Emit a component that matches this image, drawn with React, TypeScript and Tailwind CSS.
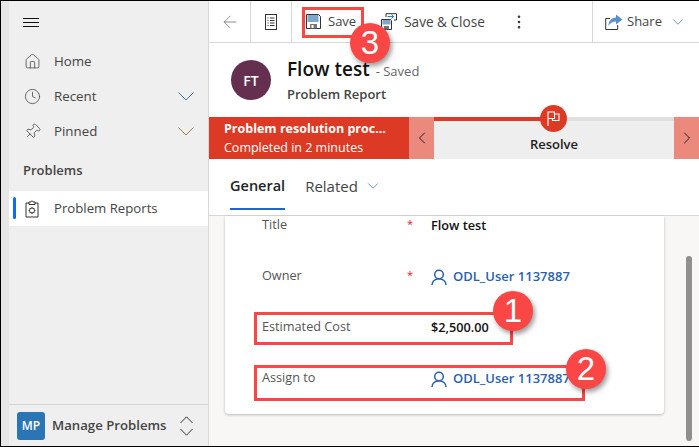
import { ChevronDown, ChevronLeft, ChevronRight, Clock, Home, Pin, ArrowLeft, MoreVertical } from "lucide-react";

const font = { fontFamily: '"Open Sans", "Noto Sans", sans-serif' };

function PersonIcon() {
  return (
    <svg width="16" height="17" viewBox="0 0 16 17" fill="none" stroke="#2a5fb0" strokeWidth="1.5" className="shrink-0">
      <circle cx="8" cy="5.5" r="4.3" />
      <path d="M1 16c0-3.6 3-6.2 7-6.2s7 2.6 7 6.2" />
    </svg>
  );
}

function SaveIcon() {
  return (
    <svg width="15" height="15" viewBox="0 0 15 15" className="shrink-0">
      <path d="M.5.5h12l2 2v12H.5z" fill="#fff" stroke="#333" />
      <rect x="1.5" y="1" width="11" height="7" fill="#7fa8c9" />
      <rect x="4" y="10" width="7" height="4.5" fill="#777" />
      <rect x="5.5" y="11" width="2" height="3" fill="#fff" />
    </svg>
  );
}

function SaveCloseIcon() {
  return (
    <svg width="16" height="17" viewBox="0 0 16 17" className="shrink-0">
      <path d="M.5 6.5h9l1 1v9H.5z" fill="#fff" stroke="#333" />
      <rect x="1.5" y="7" width="8" height="4.5" fill="#7fa8c9" />
      <rect x="3" y="13" width="5" height="3.5" fill="#777" />
      <path d="M5 4V.7h10.5V7H13" fill="none" stroke="#333" />
      <path d="M6.5 3.5h6M10.5 1.5l2 2-2 2" fill="none" stroke="#2b7cd3" />
    </svg>
  );
}

function FormIcon() {
  return (
    <svg width="12" height="16" viewBox="0 0 12 16" fill="none" stroke="#333" className="shrink-0">
      <rect x=".5" y=".5" width="11" height="15" />
      <path d="M2.5 4h1M5 4h4.5M2.5 6.5h1M5 6.5h4.5M2.5 9h1M5 9h4.5M2.5 11.500h1M5 11.500h4.500" />
    </svg>
  );
}

function ShareIcon() {
  return (
    <svg width="18" height="16" viewBox="0 0 18 16" fill="none" className="shrink-0">
      <path d="M5 4.500H.7v11h12V11" stroke="#333" />
      <path d="M11 .5l6.500 5-6.500 5V7.500C7.500 7.500 5 9 3.500 12 3.500 7 6.500 3.500 11 3.500z" fill="#5b8fc9" />
    </svg>
  );
}

function ReportIcon() {
  return (
    <svg width="14" height="18" viewBox="0 0 14 18" fill="none" stroke="#333" className="shrink-0">
      <path d="M4 3H1v14h12V3h-3" />
      <path d="M4 4.500V2h2a1 1 0 0 1 2 0h2v2.500z" />
      <circle cx="7" cy="10.500" r="2.500" />
      <path d="M7 7v1M7 13v1M3.500 10.500h1M9.500 10.500h1M4.700 8.200l.6.6M8.700 12.200l.6.6M9.300 8.200l-.6.6M5.300 12.200l-.6.6" />
    </svg>
  );
}

function FlagIcon() {
  return (
    <svg width="13" height="15" viewBox="0 0 13 15" fill="none" stroke="#fff" strokeWidth="1.100">
      <path d="M1 15V1h6.500v6.500H1M7.500 3H12v6.500H5.500V7.500" />
    </svg>
  );
}

function WideChevron({ className }: { className: string }) {
  return (
    <svg width="16" height="9" viewBox="0 0 16 9" fill="none" stroke="currentColor" className={className}>
      <path d="M.5.5L8 8l7.500-7.500" />
    </svg>
  );
}

function UpDownIcon() {
  return (
    <svg width="13" height="20" viewBox="0 0 13 20" fill="none" stroke="#333">
      <path d="M.5 7L6.500.8 12.500 7M.5 13l6 6.200 6-6.200" />
    </svg>
  );
}

function NavRow({ icon, label, chevron }: { icon: React.ReactNode; label: string; chevron?: string }) {
  return (
    <div className="flex h-[35px] items-center pl-[14px] pr-[14px] text-[13.300px] text-[#444]">
      <span className="flex w-[18px] justify-center">{icon}</span>
      <span className="ml-[13px] flex-1">{label}</span>
      {chevron === "blue" && <WideChevron className="text-[#3f78b8]" />}
      {chevron === "amber" && <WideChevron className="text-[#a67c45]" />}
    </div>
  );
}

function Field({ label, star, children }: { label: string; star?: boolean; children: React.ReactNode }) {
  return (
    <div className="flex h-[51px] pl-[37px]">
      <span className="w-[145px] text-[12.700px] leading-[16px] text-[#555]">{label}</span>
      <span className="w-[24px] text-[11px] leading-[16px] text-[#e02020]">{star ? "*" : ""}</span>
      <div className="mt-[1px] flex h-[18px] items-center gap-[6px] text-[12.700px] font-semibold text-[#111]">{children}</div>
    </div>
  );
}

function Badge({ n, className }: { n: string; className: string }) {
  return (
    <div className={`absolute flex h-[40px] w-[40px] items-center justify-center rounded-full bg-[#fb4646] font-['Liberation_Sans'] text-[33px] text-white shadow-[2px_3px_5px_rgba(0,0,0,0.4)] ${className}`}>
      {n}
    </div>
  );
}

export default function App() {
  return (
    <div className="relative h-[447px] w-[699px] overflow-hidden bg-white" style={font}>
      <div className="flex h-full border-y border-l border-black">
        {/* Sidebar */}
        <div className="w-[8px] shrink-0 bg-[#e6e6e6]" />
        <div className="flex w-[200px] shrink-0 flex-col border-r border-[#d8d8d8] bg-[#efefef]">
          <div className="flex h-[43px] items-center pb-[1px] pl-[14px]">
            <div className="flex w-[16px] flex-col gap-[3px]">
              <div className="h-[1px] bg-[#111]" />
              <div className="h-[1px] bg-[#111]" />
              <div className="h-[1px] bg-[#111]" />
            </div>
          </div>
          <div>
            <NavRow icon={<Home size={17} strokeWidth={1.100} />} label="Home" />
            <NavRow icon={<Clock size={17} strokeWidth={1.100} />} label="Recent" chevron="blue" />
            <NavRow icon={<Pin size={17} strokeWidth={1.100} className="rotate-45" />} label="Pinned" chevron="amber" />
          </div>
          <div className="flex h-[42px] items-center pl-[14px] pt-[2px] text-[13px] font-semibold text-[#444]">Problems</div>
          <div className="relative flex h-[35px] items-center bg-white pl-[14px] text-[13.200px] text-[#444]">
            <div className="absolute left-[4px] top-[6px] h-[22px] w-[3px] rounded-sm bg-[#0f6cf2]" />
            <span className="flex w-[18px] justify-center"><ReportIcon /></span>
            <span className="ml-[13px] pt-[1px]">Problem Reports</span>
          </div>
          <div className="flex-1" />
          <div className="flex h-[42px] items-center border-t border-[#d5d5d5] pl-[8px] pr-[15px]">
            <div className="flex h-[28px] w-[28px] items-center justify-center rounded-[3px] bg-[#2a75b3] text-[12px] font-semibold text-white">MP</div>
            <span className="ml-[7px] flex-1 text-[13.200px] font-semibold text-[#444]">Manage Problems</span>
            <UpDownIcon />
          </div>
        </div>

        {/* Main column */}
        <div className="flex min-w-0 flex-1 flex-col">
          <div className="flex h-[42px] shrink-0 items-center border-b border-[#d8d8d8] text-[13px] text-[#444]">
            <div className="flex h-full w-[42px] items-center justify-center border-r border-[#d8d8d8]">
              <ArrowLeft size={20} strokeWidth={1} className="text-[#777]" />
            </div>
            <div className="flex h-full w-[41px] items-center justify-center border-r border-[#d8d8d8]"><FormIcon /></div>
            <div className="ml-[14px] flex items-center gap-[7px]"><SaveIcon /><span className="pt-[1px]">Save</span></div>
            <div className="ml-[25px] flex items-center gap-[7px]"><SaveCloseIcon /><span className="pt-[1px] text-[13.600px]">Save &amp; Close</span></div>
            <MoreVertical size={18} strokeWidth={1.500} className="ml-[25px] text-[#333]" />
            <div className="ml-auto flex h-full w-[107px] items-center gap-[4px] border-l border-[#d8d8d8] pl-[12px]">
              <ShareIcon /><span className="pt-[1px]">Share</span><ChevronDown size={18} strokeWidth={1} className="ml-[3px] text-[#3f6fa8]" />
            </div>
          </div>

          <div className="flex h-[74px] shrink-0 items-center pl-[22px]">
            <div className="flex h-[40px] w-[40px] items-center justify-center rounded-full bg-[#65304f] text-[14px] font-semibold text-white">FT</div>
            <div className="ml-[16px] mt-[-2px]">
              <div className="flex items-baseline gap-[6px] leading-[28px]">
                <span className="text-[19px] font-semibold text-[#111]">Flow test</span>
                <span className="text-[13px] text-[#666]">- Saved</span>
              </div>
              <div className="text-[13px] font-semibold leading-[18px] text-[#444]">Problem Report</div>
            </div>
          </div>

          <div className="flex h-[42px] shrink-0">
            <div className="flex w-[200px] flex-col justify-center bg-[#dc3a24] pl-[15px] text-white">
              <div className="text-[12.500px] font-bold leading-[19px]">Problem resolution proc...</div>
              <div className="text-[12.500px] leading-[19px]">Completed in 2 minutes</div>
            </div>
            <div className="flex w-[25px] items-center justify-center bg-[#eb8a7c]"><ChevronLeft size={20} strokeWidth={1.200} className="text-[#222]" /></div>
            <div className="flex flex-1 flex-col bg-[#eeeeee]">
              <div className="flex h-[4px]">
                <div className="w-[108px] bg-[#dc3a24]" />
                <div className="flex-1 bg-[#e0e0e0]" />
              </div>
              <div className="flex flex-1 items-end justify-center pb-[5px] text-[13px] font-semibold text-[#222]">Resolve</div>
            </div>
            <div className="flex w-[25px] items-center justify-center bg-[#eb8a7c]"><ChevronRight size={20} strokeWidth={1.200} className="text-[#222]" /></div>
          </div>

          <div className="flex h-[57px] shrink-0 items-start border-b border-[#d8d8d8] pl-[21px]">
            <div className="flex h-[51px] items-center border-b-2 border-[#1f63d6] pt-[5px] text-[14.500px] font-semibold text-[#222]">General</div>
            <div className="ml-[20px] flex h-[51px] items-center gap-[6px] pt-[3px] text-[15px] text-[#444]">
              Related<ChevronDown size={18} strokeWidth={1} className="text-[#3f6fa8]" />
            </div>
          </div>

          <div className="flex min-h-0 flex-1 bg-[#f8f7f6]">
            <div className="ml-[16px] h-[198px] w-[439px] rounded-b-[4px] bg-white shadow-[0_1px_3px_rgba(0,0,0,0.25)]">
              <Field label="Title" star>Flow test</Field>
              <Field label="Owner" star><PersonIcon /><span className="text-[13px] text-[#2a5fb0]">ODL_User 1137887</span></Field>
              <Field label="Estimated Cost">$2,500.00</Field>
              <Field label="Assign to"><PersonIcon /><span className="text-[13px] text-[#2a5fb0]">ODL_User 1137887</span></Field>
            </div>
            <div className="ml-[22px] mt-[40px] mb-[5px] w-[6px] rounded-full bg-[#8f8f8f]" />
          </div>
        </div>
      </div>

      {/* Flag on the process bar */}
      <div className="absolute left-[540px] top-[105px] flex h-[27px] w-[27px] items-center justify-center rounded-full bg-[#dc3a24]"><FlagIcon /></div>

      {/* Callouts */}
      <div className="absolute left-[302px] top-[7px] h-[31px] w-[62px] border-[3px] border-[#fb4646]" />
      <div className="absolute left-[254px] top-[312px] h-[33px] w-[259px] border-[3px] border-[#fb4646]" />
      <div className="absolute left-[254px] top-[365px] h-[36px] w-[331px] border-[3px] border-[#fb4646]" />
      <Badge n="3" className="left-[350px] top-[23px]" />
      <Badge n="1" className="left-[493px] top-[291px]" />
      <Badge n="2" className="left-[566px] top-[349px]" />
    </div>
  );
}
